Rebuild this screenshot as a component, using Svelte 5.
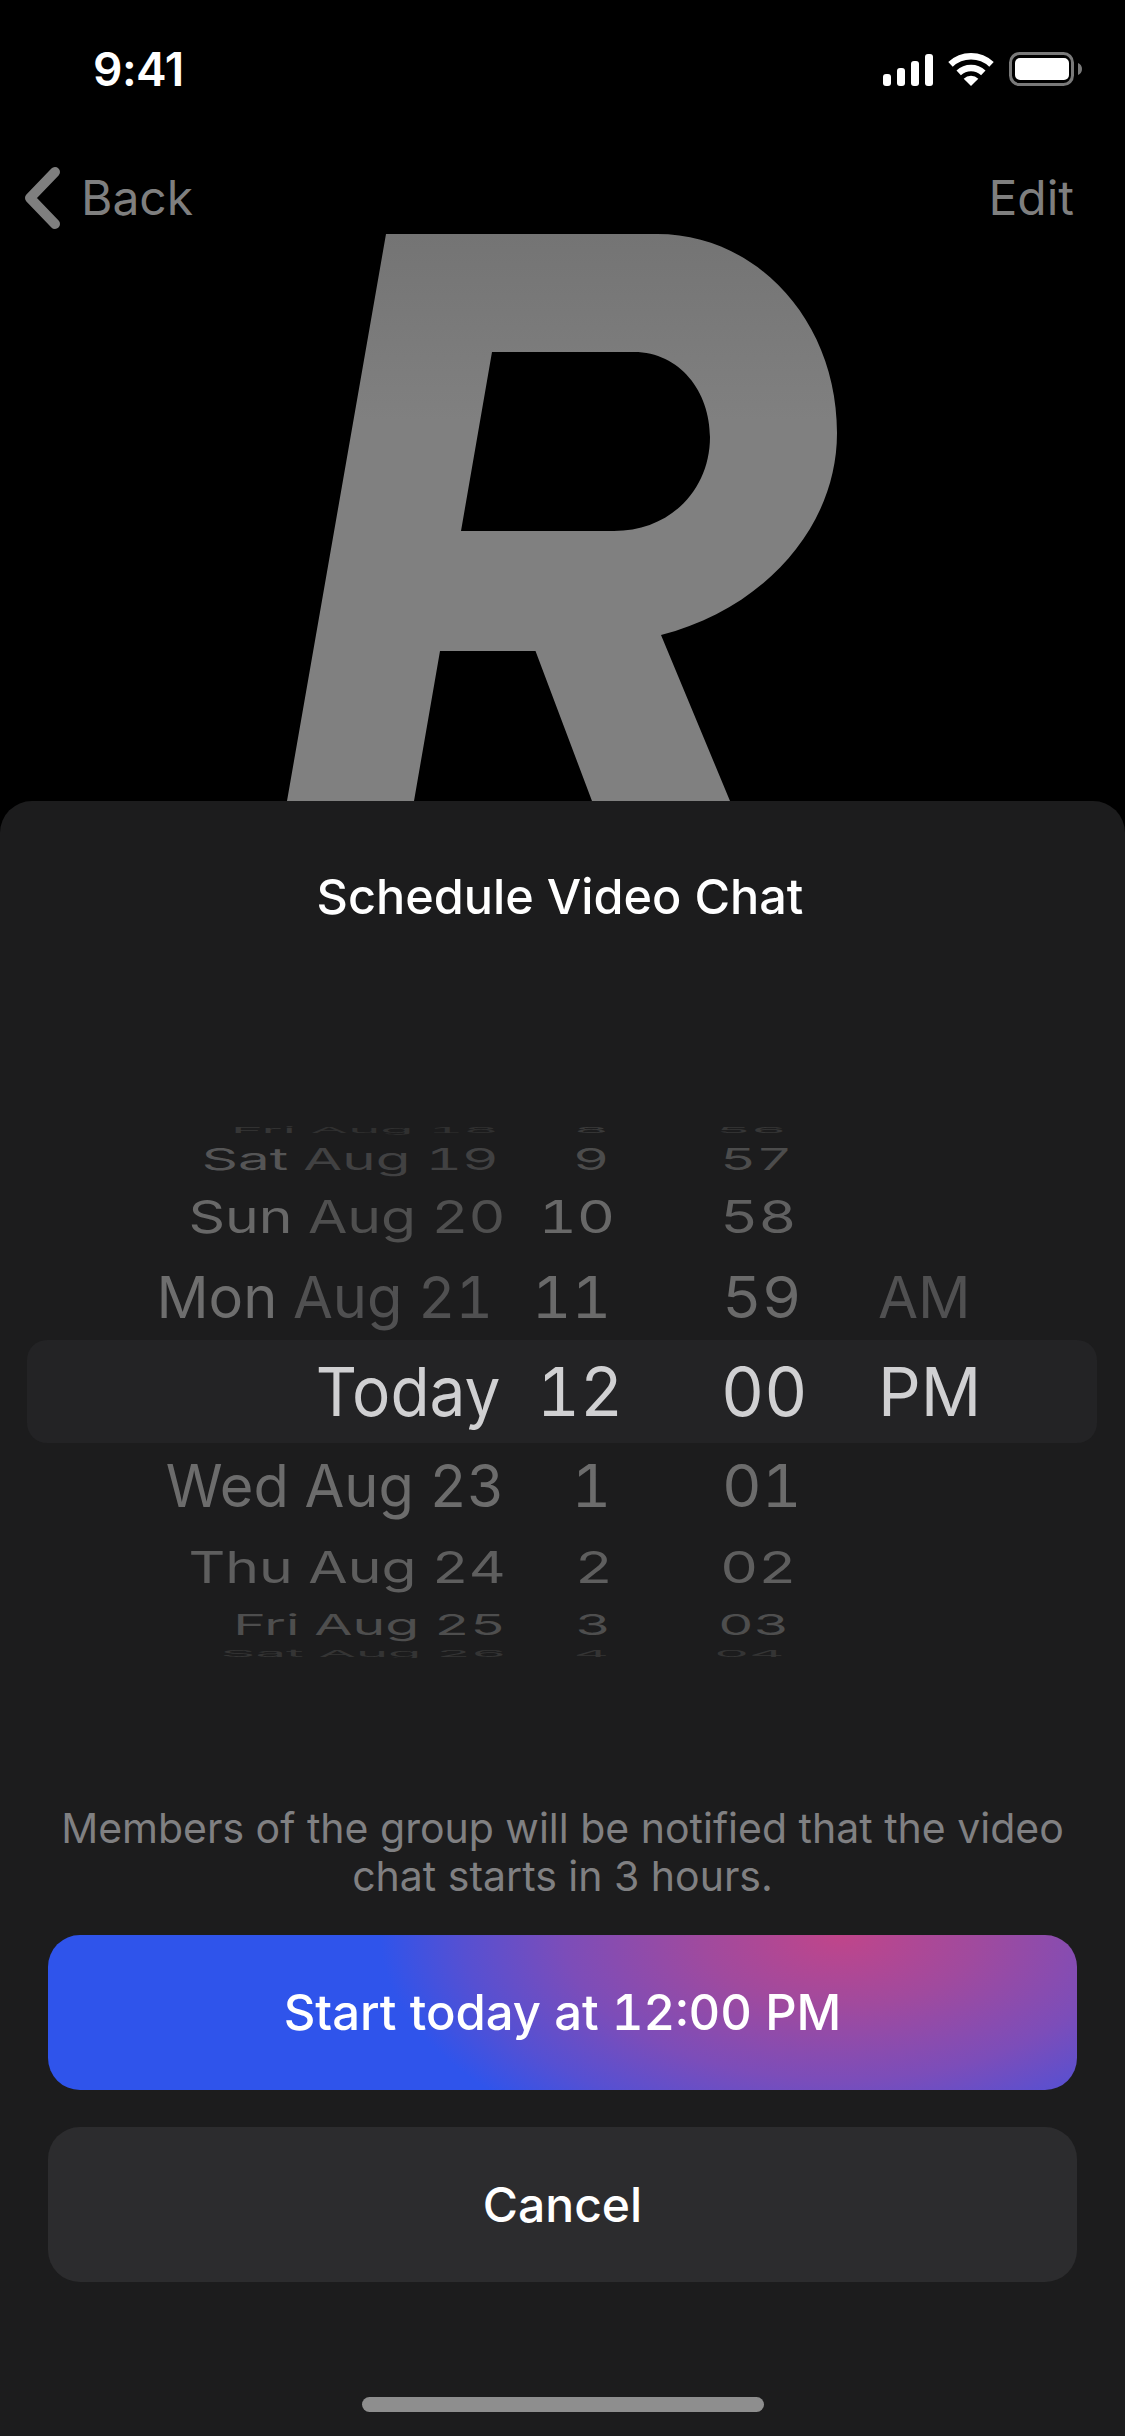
<script>
  const rows = [
    { day: 'Fri', date: 'Aug 18', hour: '8', min: '56', ap: '', h: 16, sy: 0.12, sx: 0.8, nx: 0.8, ax: 0.8, dx: -6, c: '#363636', dim: '#303030', hc: '#3a3a3a', mc: '#363636', hx: -10, mx: -6 },
    { day: 'Sat', date: 'Aug 19', hour: '9', min: '57', ap: '', h: 42, sy: 0.44, sx: 0.83, nx: 0.82, ax: 0.8, dx: -6, c: '#555556', dim: '#414142', hc: '#4c4c4c', mc: '#4c4c4c', hx: -10, mx: -2 },
    { day: 'Sun', date: 'Aug 20', hour: '10', min: '58', ap: '', h: 72, sy: 0.66, sx: 0.84, nx: 0.87, ax: 0.8, dx: 1, c: '#686868', dim: '#4f4f4f', hc: '#686868', mc: '#606060', hx: -4, mx: -2 },
    { day: 'Mon', date: 'Aug 21', hour: '11', min: '59', ap: 'AM', h: 90, sy: 0.85, sx: 0.85, nx: 0.9, ax: 0.855, dx: -12, c: '#6e6e6e', dim: '#505051', hc: '#6a6a6a', mc: '#6a6a6a', hx: -8, mx: 0 },
    { day: 'Today', date: '', hour: '12', min: '00', ap: 'PM', h: 98, sy: 1, sx: 0.94, nx: 0.98, ax: 0.985, dx: -5, c: '#d0d0d2', dim: '#d0d0d2', hc: '#d0d0d2', mc: '#d0d0d2', hx: 4, mx: -1 },
    { day: 'Wed', date: 'Aug 23', hour: '1', min: '01', ap: '', h: 92, sy: 0.86, sx: 0.85, nx: 0.9, ax: 0.8, dx: -1, c: '#6c6c6c', dim: '#6c6c6c', hc: '#6c6c6c', mc: '#6c6c6c', hx: -8, mx: 0 },
    { day: 'Thu', date: 'Aug 24', hour: '2', min: '02', ap: '', h: 70, sy: 0.65, sx: 0.84, nx: 0.87, ax: 0.8, dx: 1, c: '#5e5e5e', dim: '#5e5e5e', hc: '#5e5e5e', mc: '#5e5e5e', hx: -6, mx: -2 },
    { day: 'Fri', date: 'Aug 25', hour: '3', min: '03', ap: '', h: 46, sy: 0.42, sx: 0.814, nx: 0.81, ax: 0.8, dx: 1, c: '#4e4e4e', dim: '#4e4e4e', hc: '#4e4e4e', mc: '#4e4e4e', hx: -8, mx: -4 },
    { day: 'Sat', date: 'Aug 26', hour: '4', min: '04', ap: '', h: 10, sy: 0.14, sx: 0.8, nx: 0.8, ax: 0.8, dx: 2, c: '#343434', dim: '#343434', hc: '#343434', mc: '#343434', hx: -10, mx: -8 }
  ];
</script>

<div class="phone">
  <header class="top">
    <div class="status">
      <span class="clock">9:41</span>
      <div class="status-icons">
        <div class="signal">
          <i class="b1"></i><i class="b2"></i><i class="b3"></i><i class="b4"></i>
        </div>
        <svg class="wifi" viewBox="-23 -34 46 35" width="46" height="35">
          <path d="M-20.5 -21.6A30 30 0 0 1 20.5 -21.6" fill="none" stroke="#fff" stroke-width="6.5" />
          <path d="M-12.3 -13.1A18 18 0 0 1 12.3 -13.1" fill="none" stroke="#fff" stroke-width="6.5" />
          <path d="M0 0L-7.3 -7.3A10.3 10.3 0 0 1 7.3 -7.3Z" fill="#fff" />
        </svg>
        <svg class="battery" viewBox="0 0 73 34" width="73" height="34">
          <rect x="1.5" y="1.5" width="62" height="31" rx="9" fill="none" stroke="#7a7a7a" stroke-width="3" />
          <rect x="6" y="6" width="54" height="22" rx="5" fill="#fff" />
          <path d="M69 11C71.5 12 73 14.3 73 17C73 19.7 71.5 22 69 23Z" fill="#7a7a7a" />
        </svg>
      </div>
    </div>

    <nav class="nav">
      <div class="back">
        <svg viewBox="0 0 42 66" width="42" height="66">
          <path d="M33 7L8 33L33 59" fill="none" stroke="#7f7f7f" stroke-width="10" stroke-linecap="round" stroke-linejoin="round" />
        </svg>
        <span>Back</span>
      </div>
      <span>Edit</span>
    </nav>

    <svg class="logo" viewBox="280 234 565 567" width="565" height="567">
      <defs>
        <linearGradient id="logo-fill" gradientUnits="userSpaceOnUse" x1="0" y1="234" x2="0" y2="420">
          <stop offset="0" stop-color="#747474" />
          <stop offset="1" stop-color="#808080" />
        </linearGradient>
      </defs>
      <path
        fill="url(#logo-fill)"
        fill-rule="evenodd"
        d="M386 234L657 234C757 234 837 321 837 433C837 530 760 610 661 635L730 801L592 801L535.5 651L440 651L414 801L287 801ZM492 352L634 352C680 352 710 392 710 437C710 490 670 531 614 531L461 531Z"
      />
    </svg>
  </header>

  <section class="sheet">
    <h2>Schedule Video Chat</h2>

    <div class="picker">
      <div class="highlight"></div>
      {#each rows as row}
        <div class="row" style:height="{row.h}px" style:line-height="{row.h}px" style:--sy={row.sy}>
          <div class="cell right">
            <span class="wheel origin-right" style:color={row.c} style:--sx={row.sx} style:--dx="{row.dx}px">{row.day}{#if row.date}&nbsp;<span style:color={row.dim}>{row.date}</span>{/if}</span>
          </div>
          <div class="cell right">
            <span class="wheel origin-right" style:color={row.hc} style:--sx={row.nx} style:--dx="{row.hx}px">{row.hour}</span>
          </div>
          <div class="cell">
            <span class="wheel origin-left" style:color={row.mc} style:--sx={row.nx} style:--dx="{row.mx}px">{row.min}</span>
          </div>
          <div class="cell">
            <span class="wheel origin-left" style:color={row.ap === 'AM' ? '#505051' : row.c} style:--sx={row.ax} style:--dx="-5px">{row.ap}</span>
          </div>
        </div>
      {/each}
    </div>

    <p class="note">Members of the group will be notified that the video chat starts in 3 hours.</p>

    <button type="button" class="action start">Start today at 12:00 PM</button>
    <button type="button" class="action cancel">Cancel</button>

    <div class="home-bar"></div>
  </section>
</div>

<style>
  :global(body) {
    background: #000;
  }

  .phone {
    width: 1125px;
    height: 2436px;
    display: flex;
    flex-direction: column;
    overflow: hidden;
    background: #000;
    font-family: Inter, "Liberation Sans", sans-serif;
    color: #fff;
  }

  .top {
    height: 801px;
    flex: none;
    overflow: hidden;
    display: flex;
    flex-direction: column;
  }

  .status {
    height: 137px;
    flex: none;
    display: flex;
    justify-content: space-between;
    padding: 51px 43px 0 93px;
    box-sizing: border-box;
  }

  .clock {
    font-size: 46px;
    font-weight: 600;
    line-height: 36px;
    letter-spacing: -0.5px;
  }

  .status-icons {
    display: flex;
    gap: 15px;
    height: 35px;
  }

  .signal {
    display: flex;
    align-items: flex-end;
    gap: 5.5px;
    height: 33px;
    margin-top: 2px;
  }

  .signal i {
    display: block;
    width: 8.5px;
    border-radius: 3px;
    background: #fff;
  }

  .b1 { height: 12px; }
  .b2 { height: 18px; }
  .b3 { height: 25px; }
  .b4 { height: 32px; }

  .wifi {
    display: block;
    margin-top: 1px;
  }

  .battery {
    display: block;
    margin-top: 1px;
  }

  .nav {
    height: 97px;
    flex: none;
    box-sizing: border-box;
    padding: 28px 51px 0 22px;
    display: flex;
    justify-content: space-between;
    font-size: 48px;
    color: #7f7f7f;
  }

  .back {
    display: flex;
    gap: 17px;
    height: 66px;
  }

  .back span,
  .nav > span {
    line-height: 66px;
  }

  .logo {
    display: block;
    flex: none;
    margin-left: 280px;
  }

  .sheet {
    flex: 1;
    display: flex;
    flex-direction: column;
    background: #1c1c1d;
    border-radius: 32px 32px 0 0;
  }

  h2 {
    margin: 66px 5px 0 0;
    font-size: 48.6px;
    font-weight: 500;
    line-height: 60px;
    text-align: center;
  }

  .picker {
    position: relative;
    margin-top: 195px;
    overflow: hidden;
  }

  .highlight {
    position: absolute;
    top: 218px;
    left: 27px;
    right: 28px;
    height: 103px;
    border-radius: 20px;
    background: #232325;
  }

  .row {
    position: relative;
    display: grid;
    grid-template-columns: 505px 114px 161px 1fr;
    font-size: 68px;
    font-feature-settings: "tnum";
    white-space: nowrap;
  }

  .cell {
    height: 100%;
  }

  .cell.right {
    text-align: right;
  }

  .row .cell:nth-child(3) {
    padding-left: 103px;
    margin-right: -103px;
  }

  .row .cell:nth-child(4) {
    padding-left: 103px;
  }

  .wheel {
    display: inline-block;
    transform: translateX(var(--dx, 0)) scale(var(--sx), var(--sy));
  }

  .origin-right {
    transform-origin: right center;
  }

  .origin-left {
    transform-origin: left center;
  }

  .note {
    margin: 146px 48px 0;
    font-size: 41px;
    line-height: 48px;
    text-align: center;
    color: #808082;
  }

  .action {
    display: block;
    height: 155px;
    margin: 35px 48px 0;
    border: none;
    border-radius: 32px;
    font-family: inherit;
    font-size: 48px;
    font-weight: 550;
    color: #fff;
    flex: none;
  }

  .start {
    font-size: 49px;
    font-feature-settings: "tnum";
    background:
      radial-gradient(460px 240px at 792px 0, #c0458a 0%, #a04a9e 30%, #7c4db9 60%, #5650d2 82%, rgba(47, 84, 235, 0) 100%),
      #2f54eb;
  }

  .cancel {
    margin-top: 37px;
    background: #2c2c2e;
  }

  .home-bar {
    width: 402px;
    height: 15px;
    margin: 115px auto 0;
    border-radius: 8px;
    background: #8e8e8e;
    flex: none;
  }
</style>
